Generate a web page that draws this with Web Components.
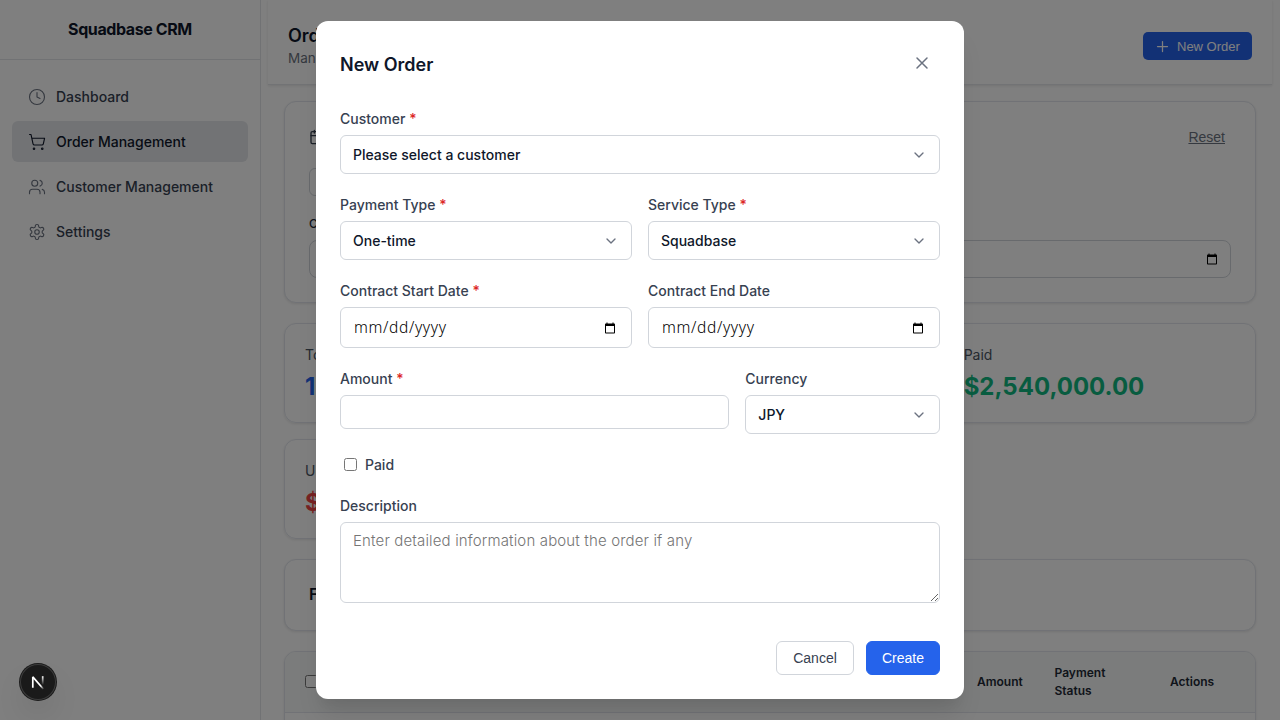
<!DOCTYPE html>
<html lang="en">
<head>
<meta charset="utf-8">
<title>Squadbase CRM</title>
<style>
html,body{margin:0;height:100%;overflow:hidden;background:#fff}
body{font-family:Inter,"Liberation Sans",sans-serif;color:#0f172a}
</style>
</head>
<body>
<crm-app></crm-app>
<script>
const ICONS = {
  clock: '<circle cx="12" cy="12" r="10"/><path d="M12 6v6l4 2"/>',
  cart: '<circle cx="8" cy="21" r="1"/><circle cx="19" cy="21" r="1"/><path d="M2.05 2.05h2l2.66 12.42a2 2 0 0 0 2 1.58h9.78a2 2 0 0 0 1.95-1.57l1.65-7.43H5.12"/>',
  users: '<path d="M16 21v-2a4 4 0 0 0-4-4H6a4 4 0 0 0-4 4v2"/><circle cx="9" cy="7" r="4"/><path d="M22 21v-2a4 4 0 0 0-3-3.87M16 3.13a4 4 0 0 1 0 7.75"/>',
  gear: '<path d="M12.22 2h-.44a2 2 0 0 0-2 2v.18a2 2 0 0 1-1 1.73l-.43.25a2 2 0 0 1-2 0l-.15-.08a2 2 0 0 0-2.73.73l-.22.38a2 2 0 0 0 .73 2.73l.15.1a2 2 0 0 1 1 1.72v.51a2 2 0 0 1-1 1.74l-.15.09a2 2 0 0 0-.73 2.73l.22.38a2 2 0 0 0 2.73.73l.15-.08a2 2 0 0 1 2 0l.43.25a2 2 0 0 1 1 1.73V20a2 2 0 0 0 2 2h.44a2 2 0 0 0 2-2v-.18a2 2 0 0 1 1-1.73l.43-.25a2 2 0 0 1 2 0l.15.08a2 2 0 0 0 2.73-.73l.22-.39a2 2 0 0 0-.73-2.73l-.15-.08a2 2 0 0 1-1-1.74v-.5a2 2 0 0 1 1-1.74l.15-.09a2 2 0 0 0 .73-2.73l-.22-.38a2 2 0 0 0-2.73-.73l-.15.08a2 2 0 0 1-2 0l-.43-.25a2 2 0 0 1-1-1.73V4a2 2 0 0 0-2-2z"/><circle cx="12" cy="12" r="3"/>',
  plus: '<path d="M4 12h16M12 4v16"/>',
  close: '<path d="M18 6 6 18M6 6l12 12"/>',
  chevron: '<path d="m6 9 6 6 6-6"/>',
  calendar: '<rect x="3" y="4" width="18" height="18" rx="2"/><path d="M16 2v4M8 2v4M3 10h18"/>',
  picker: '<path fill="currentColor" stroke="none" d="M20 3h-1V1h-2v2H7V1H5v2H4c-1.100 0-2 .9-2 2v16c0 1.100.9 2 2 2h16c1.100 0 2-.9 2-2V5c0-1.100-.9-2-2-2zm0 18H4V8h16v13z"/>'
};
function define(name, css, html) {
  customElements.define(name, class extends HTMLElement {
    connectedCallback() {
      if (this.shadowRoot) return;
      const root = this.attachShadow({ mode: 'open' });
      root.innerHTML = `<style>*{box-sizing:border-box}:host{display:block;box-sizing:border-box}${css}</style>` +
        (typeof html === 'function' ? html(this) : html);
    }
  });
}

define('crm-icon', ':host{display:block;flex:none;width:var(--size,18px);height:var(--size,18px)}svg{display:block;width:100%;height:100%}',
  el => `<svg viewBox="0 0 24 24" fill="none" stroke="currentColor" stroke-width="${el.getAttribute('weight') || 1.5}" stroke-linecap="round" stroke-linejoin="round">${ICONS[el.getAttribute('name')]}</svg>`);

define('nav-item', `
:host{display:flex;align-items:center;gap:10px;height:41px;padding:0 16px;border-radius:6px;font-size:14px;font-weight:500;color:#374151}
:host([active]){background:#e5e7eb;color:#0f172a}
crm-icon{color:#6b7280}:host([active]) crm-icon{color:#0f172a}`,
  el => `<crm-icon name="${el.getAttribute('icon')}"></crm-icon><slot></slot>`);

define('crm-sidebar', `
:host{width:261px;flex:none;border-right:1px solid #e2e4e9;background:#fff}
header{height:60px;display:flex;align-items:center;justify-content:center;padding-bottom:2px;border-bottom:1px solid #e2e4e9;font-size:16px;font-weight:700;letter-spacing:-.4px}
nav{display:flex;flex-direction:column;gap:4px;padding:16px 12px}`,
  `<header><span>Squadbase CRM</span></header><nav>
  <nav-item icon="clock">Dashboard</nav-item>
  <nav-item icon="cart" active>Order Management</nav-item>
  <nav-item icon="users">Customer Management</nav-item>
  <nav-item icon="gear">Settings</nav-item></nav>`);

define('crm-header', `
:host{display:flex;justify-content:space-between;align-items:center;height:85px;padding:0 20px 0 20px;border-bottom:1px solid #e5e7eb;box-shadow:0 1px 3px rgba(0,0,0,.1)}
h1{margin:0;font-size:18px;line-height:24px;font-weight:600}
p{margin:0;font-size:13.500px;line-height:20px;color:#6b7280}
.text{padding-top:7px}
button{display:flex;align-items:center;gap:7px;width:109px;height:28px;margin-top:7px;padding:1px 12px 0;border:0;border-radius:5px;background:#2563eb;color:#fff;font:13px "Liberation Sans",sans-serif;white-space:nowrap;--size:15px}`,
  `<div class="text"><h1>Orders</h1><p>Manage</p></div>
  <button><crm-icon name="plus" weight="2"></crm-icon>New Order</button>`);

define('crm-card', ':host{border:1px solid #e2e5ec;border-radius:12px;background:#fff;box-shadow:0 1px 3px rgba(0,0,0,.1)}', '<slot></slot>');

define('date-field', `
:host{display:flex;align-items:center;justify-content:space-between;height:var(--h,41px);border:1px solid #d1d5db;border-radius:6px;padding:0 15px 1px 13px;background:#fff;color:#000;font:300 15.500px "Noto Sans",sans-serif;--size:12px}
span{letter-spacing:.65px}
crm-icon{margin-top:1px}`,
  '<span><slot></slot></span><crm-icon name="picker"></crm-icon>');

define('order-filters', `
:host{height:200px;padding:24px}
.top{display:flex;justify-content:space-between;align-items:center;height:22px;color:#374151;--size:16px}
a{font:14px "Liberation Sans",sans-serif;color:#6b7280;text-decoration:underline;margin-right:6px}
.chip{width:120px;height:28px;margin-top:20px;border:1px solid #d1d5db;border-radius:6px}
label{display:block;font-size:12px;line-height:18px;font-weight:500;color:#1f2937;margin:19px 0 7px}
date-field{--h:38px;border-radius:8px;padding-right:12px;background:none}`,
  `<div class="top"><crm-icon name="calendar" weight="2"></crm-icon><a>Reset</a></div>
  <div class="chip"></div><label>Contract</label><date-field></date-field>`);

define('stat-card', `
:host{height:100px;padding:20px;border:1px solid #e2e5ec;border-radius:12px;box-shadow:0 1px 3px rgba(0,0,0,.1)}
p{margin:0;font-size:14px;line-height:22px;color:#4b5563}
strong{display:block;font-size:24px;line-height:42px;font-weight:700;color:var(--tone)}`,
  el => `<p>${el.getAttribute('label')}</p><strong><slot></slot></strong>`);

define('order-table', `
:host{display:grid;grid-template-columns:672px 77.500px 115.500px 1fr;align-items:center;height:61px;padding-left:20px;background:#f6f9f8;border-bottom:1px solid #e2e5ec;border-radius:11px 11px 0 0;font-size:12px;font-weight:600;line-height:18px;color:#1f2937}
input{display:block;margin:0 0 2px;justify-self:start}`,
  '<input type="checkbox"><span>Amount</span><span>Payment<br>Status</span><span>Actions</span>');

define('orders-page', `
:host{flex:1;min-width:0;padding:0 8px 0 7px;overflow:hidden}
main{padding:16px 16px 0;display:flex;flex-direction:column;gap:20px}
.stats{display:grid;grid-template-columns:repeat(3,1fr);gap:16px}
.list{height:72px;display:flex;align-items:center;padding:0 24px 2px;font-size:16px;font-weight:600}
.table{height:200px}`,
  `<crm-header></crm-header><main>
  <crm-card><order-filters></order-filters></crm-card>
  <section class="stats">
    <stat-card label="Total" style="--tone:#2563eb">12</stat-card><stat-card label=""></stat-card>
    <stat-card label="Paid" style="--tone:#10b981">$2,540,000.00</stat-card>
    <stat-card label="Unpaid" style="--tone:#ef4444">$0</stat-card>
  </section>
  <crm-card class="list">Filter</crm-card>
  <crm-card class="table"><order-table></order-table></crm-card></main>`);

define('form-field', `
:host{min-width:0}
label{display:block;height:20px;line-height:20px;margin-bottom:6px;font-size:14px;font-weight:500;color:#374151}
i{font-style:normal;color:#dc2626}`,
  el => `<label>${el.getAttribute('label')}${el.hasAttribute('required') ? ' <i>*</i>' : ''}</label><slot></slot>`);

define('select-box', `
:host{display:flex;align-items:center;justify-content:space-between;height:39px;border:1px solid #d1d5db;border-radius:6px;padding:0 12px;font-size:14px;font-weight:500;--size:16px}
crm-icon{color:#6b7280}`,
  '<span><slot></slot></span><crm-icon name="chevron" weight="2"></crm-icon>');

define('text-box', 'input{display:block;width:100%;height:34px;border:1px solid #d1d5db;border-radius:6px;background:#fff}', '<input>');

define('text-area', `
textarea{display:block;width:100%;height:81px;border:1px solid #d1d5db;border-radius:6px;padding:8px 12px;background:#fff;font:300 15px/20px Inter,sans-serif;letter-spacing:.15px;resize:vertical}
textarea::placeholder{color:#757575}`,
  el => `<textarea placeholder="${el.getAttribute('placeholder')}"></textarea>`);

define('crm-button', `
button{height:34px;width:100%;border:1px solid #d1d5db;border-radius:6px;background:#fff;color:#374151;font:14px "Liberation Sans",sans-serif}
:host([primary]) button{background:#2563eb;border-color:#2563eb;color:#fff}`, '<button><slot></slot></button>');

define('order-dialog', `
:host{width:648px;height:678px;padding:24px;background:#fff;border-radius:12px;box-shadow:0 20px 25px -5px rgba(0,0,0,.1),0 10px 10px -5px rgba(0,0,0,.04)}
header{display:flex;justify-content:space-between;height:43px}
h2{margin:0;font-size:18px;line-height:39px;font-weight:600}
.x{width:36px;height:36px;display:grid;place-items:center;color:#6b7280;--size:20px}
form{display:flex;flex-direction:column;gap:21px;padding-top:21px}
.two{display:grid;grid-template-columns:1fr 1fr;gap:16px}
.amount{grid-template-columns:2fr 1fr}
.check{display:flex;align-items:center;height:20px;padding-bottom:2px;font-size:14px;font-weight:500;color:#374151}
.check input{margin:0 8px 0 4px}
footer{display:flex;justify-content:flex-end;gap:12px;padding-top:17px}`,
  `<header><h2>New Order</h2><span class="x"><crm-icon name="close" weight="1.8"></crm-icon></span></header>
  <form>
    <form-field label="Customer" required><select-box>Please select a customer</select-box></form-field>
    <div class="two"><form-field label="Payment Type" required><select-box>One-time</select-box></form-field>
    <form-field label="Service Type" required><select-box>Squadbase</select-box></form-field></div>
    <div class="two"><form-field label="Contract Start Date" required><date-field>mm/dd/yyyy</date-field></form-field>
    <form-field label="Contract End Date"><date-field>mm/dd/yyyy</date-field></form-field></div>
    <div class="two amount"><form-field label="Amount" required><text-box></text-box></form-field>
    <form-field label="Currency"><select-box>JPY</select-box></form-field></div>
    <label class="check"><input type="checkbox">Paid</label>
    <form-field label="Description"><text-area placeholder="Enter detailed information about the order if any"></text-area></form-field>
    <footer><crm-button style="width:78px">Cancel</crm-button><crm-button primary style="width:74px">Create</crm-button></footer>
  </form>`);

define('dev-badge', `
:host{position:absolute;left:20px;top:664px;width:36px;height:36px;border-radius:50%;background:#1a1a1a;box-shadow:inset 0 0 0 1px #3c3c3c,0 0 0 1px #1a1a1a,0 16px 32px -8px rgba(0,0,0,.24)}
svg{display:block}`,
  `<svg width="36" height="36" viewBox="0 0 36 36" fill="none" stroke-width="1.700"><defs><linearGradient id="a" gradientUnits="userSpaceOnUse" x1="18" y1="18" x2="24" y2="25"><stop offset=".5" stop-color="#fff"/><stop offset="1" stop-color="#fff" stop-opacity="0"/></linearGradient><linearGradient id="b" gradientUnits="userSpaceOnUse" x1="0" y1="12" x2="0" y2="21"><stop stop-color="#fff"/><stop offset="1" stop-color="#fff" stop-opacity="0"/></linearGradient></defs><path stroke="url(#a)" stroke-linejoin="bevel" d="M12.800 23.700V12.900L23.800 25.500"/><path stroke="url(#b)" d="M22.700 12.200v8.600"/></svg>`);

define('crm-app', `
:host{position:relative;height:100vh;overflow:hidden}
.page{display:flex;height:100%}
.overlay{position:absolute;inset:0;display:grid;place-items:center;background:rgba(0,0,0,.5)}`,
  `<div class="page"><crm-sidebar></crm-sidebar><orders-page></orders-page></div>
  <div class="overlay"><order-dialog></order-dialog></div><dev-badge></dev-badge>`);
</script>
</body>
</html>
